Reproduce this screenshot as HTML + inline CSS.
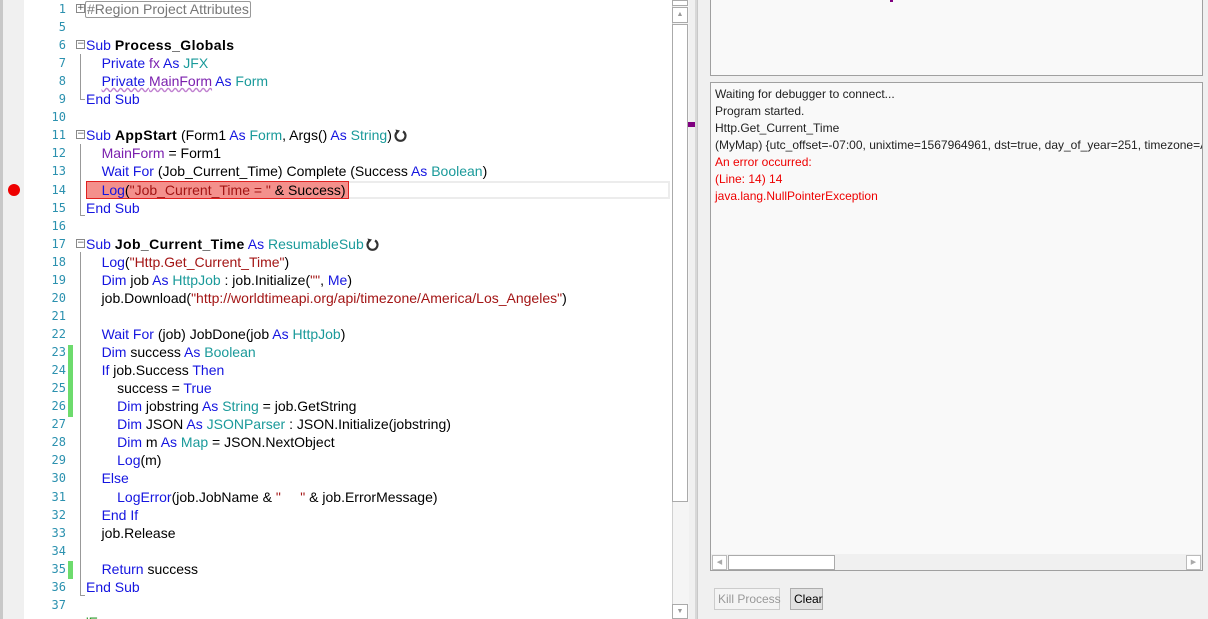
<!DOCTYPE html>
<html><head><meta charset="utf-8"><style>
*{margin:0;padding:0;box-sizing:border-box}
html,body{width:1208px;height:619px;overflow:hidden}
body{background:#f0f0f0;position:relative;font-family:"Liberation Sans",sans-serif}
#ed{position:absolute;left:0;top:0;width:672px;height:619px;background:#fff;overflow:hidden}
#gut{position:absolute;left:0;top:0;width:24px;height:619px;background:#f0f0f0;border-left:3px solid #c8c8c8}
.l{position:absolute;left:0;height:18px;line-height:18px;font-size:14px;white-space:pre;width:672px}
.n{position:absolute;left:30px;width:36px;text-align:right;color:#2b91af;font-family:"DejaVu Sans Mono","Liberation Mono",monospace;font-size:12px}
.c{position:absolute;left:86px;color:#000}
.k{color:#1515e0}.t{color:#1a9a9a}.s{color:#a31515}.p{color:#7b1fae}.b{font-weight:bold;letter-spacing:0.4px}
.fold{position:absolute;left:76px;top:4px;width:9px;height:9px;border:1px solid #888;background:#fff;font-size:9px;line-height:7px;text-align:center;color:#555;font-family:"DejaVu Sans",sans-serif}
.vl{position:absolute;left:80px;width:1px;background:#999}
.gb{position:absolute;left:68px;width:5px;height:18px;background:#6ddb6d}
.rs{display:inline-block;vertical-align:-2px;margin-left:2px}
.box{position:absolute;border:1px solid #a0a0a0;background:#f9f9f9}
.log{font-size:12px;line-height:17px;color:#222;padding:3px 0 0 4px;white-space:pre}
.btn{position:absolute;top:588px;height:22px;border:1px solid #adadad;font-size:12px;line-height:20px;padding:0 3px;white-space:nowrap}
</style></head><body>
<div id="ed">
<div id="gut"></div>
<div style="position:absolute;left:8px;top:184px;width:12px;height:12px;border-radius:50%;background:#e00"></div>
<div class="vl" style="top:54px;height:46px"></div><div style="position:absolute;left:80px;top:99px;width:5px;height:1px;background:#999"></div>
<div class="vl" style="top:144px;height:72px"></div><div style="position:absolute;left:80px;top:215px;width:5px;height:1px;background:#999"></div>
<div class="vl" style="top:252px;height:344px"></div><div style="position:absolute;left:80px;top:595px;width:5px;height:1px;background:#999"></div>
<div class="gb" style="top:345px;height:72px"></div>
<div class="gb" style="top:561px"></div>
<div style="position:absolute;left:86px;top:181px;width:584px;height:18px;border:2px solid #ececec"></div>
<div style="position:absolute;left:86px;top:181px;width:263px;height:18px;background:#f4908c;border:1px solid #e02020"></div>

<div class="l" style="top:0"><span class="n">1</span><span class="fold">+</span><span class="c" style="color:#777;border:1px solid #999;border-radius:2px;line-height:15px;top:1px;padding:0 1px;left:85px">#Region Project Attributes</span></div>
<div class="l" style="top:18px"><span class="n">5</span></div>
<div class="l" style="top:36px"><span class="n">6</span><span class="fold">−</span><span class="c"><span class="k">Sub</span> <span class="b">Process_Globals</span></span></div>
<div class="l" style="top:54px"><span class="n">7</span><span class="c">    <span class="k">Private</span> <span class="p">fx</span> <span class="k">As</span> <span class="t">JFX</span></span></div>
<div class="l" style="top:72px"><span class="n">8</span><span class="c">    <span class="k" style="text-decoration:underline wavy #c080d0">Private <span class="p">MainForm</span></span> <span class="k">As</span> <span class="t">Form</span></span></div>
<div class="l" style="top:90px"><span class="n">9</span><span class="c"><span class="k">End Sub</span></span></div>
<div class="l" style="top:108px"><span class="n">10</span></div>
<div class="l" style="top:126px"><span class="n">11</span><span class="fold">−</span><span class="c"><span class="k">Sub</span> <span class="b">AppStart</span> (Form1 <span class="k">As</span> <span class="t">Form</span>, Args() <span class="k">As</span> <span class="t">String</span>)<svg class="rs" width="13" height="13" viewBox="0 0 13 13"><path d="M4 2.5A5 5 0 1 0 9 2.5" fill="none" stroke="#333" stroke-width="2.2"/><path d="M1.5 0.5L6 1.5L3 5Z" fill="#333"/></svg></span></div>
<div class="l" style="top:144px"><span class="n">12</span><span class="c">    <span class="p">MainForm</span> = Form1</span></div>
<div class="l" style="top:162px"><span class="n">13</span><span class="c">    <span class="k">Wait For</span> (Job_Current_Time) Complete (Success <span class="k">As</span> <span class="t">Boolean</span>)</span></div>
<div class="l" style="top:181px"><span class="n">14</span><span class="c">    <span class="k">Log</span>(<span class="s">"Job_Current_Time = "</span> &amp; Success)</span></div>
<div class="l" style="top:199px"><span class="n">15</span><span class="c"><span class="k">End Sub</span></span></div>
<div class="l" style="top:217px"><span class="n">16</span></div>
<div class="l" style="top:235px"><span class="n">17</span><span class="fold">−</span><span class="c"><span class="k">Sub</span> <span class="b">Job_Current_Time</span> <span class="k">As</span> <span class="t">ResumableSub</span><svg class="rs" width="13" height="13" viewBox="0 0 13 13"><path d="M4 2.5A5 5 0 1 0 9 2.5" fill="none" stroke="#333" stroke-width="2.2"/><path d="M1.5 0.5L6 1.5L3 5Z" fill="#333"/></svg></span></div>
<div class="l" style="top:253px"><span class="n">18</span><span class="c">    <span class="k">Log</span>(<span class="s">"Http.Get_Current_Time"</span>)</span></div>
<div class="l" style="top:271px"><span class="n">19</span><span class="c">    <span class="k">Dim</span> job <span class="k">As</span> <span class="t">HttpJob</span> : job.Initialize(<span class="s">""</span>, <span class="k">Me</span>)</span></div>
<div class="l" style="top:289px"><span class="n">20</span><span class="c">    job.Download(<span class="s">"http://worldtimeapi.org/api/timezone/America/Los_Angeles"</span>)</span></div>
<div class="l" style="top:307px"><span class="n">21</span></div>
<div class="l" style="top:325px"><span class="n">22</span><span class="c">    <span class="k">Wait For</span> (job) JobDone(job <span class="k">As</span> <span class="t">HttpJob</span>)</span></div>
<div class="l" style="top:343px"><span class="n">23</span><span class="c">    <span class="k">Dim</span> success <span class="k">As</span> <span class="t">Boolean</span></span></div>
<div class="l" style="top:361px"><span class="n">24</span><span class="c">    <span class="k">If</span> job.Success <span class="k">Then</span></span></div>
<div class="l" style="top:379px"><span class="n">25</span><span class="c">        success = <span class="k">True</span></span></div>
<div class="l" style="top:397px"><span class="n">26</span><span class="c">        <span class="k">Dim</span> jobstring <span class="k">As</span> <span class="t">String</span> = job.GetString</span></div>
<div class="l" style="top:415px"><span class="n">27</span><span class="c">        <span class="k">Dim</span> JSON <span class="k">As</span> <span class="t">JSONParser</span> : JSON.Initialize(jobstring)</span></div>
<div class="l" style="top:433px"><span class="n">28</span><span class="c">        <span class="k">Dim</span> m <span class="k">As</span> <span class="t">Map</span> = JSON.NextObject</span></div>
<div class="l" style="top:451px"><span class="n">29</span><span class="c">        <span class="k">Log</span>(m)</span></div>
<div class="l" style="top:469px"><span class="n">30</span><span class="c">    <span class="k">Else</span></span></div>
<div class="l" style="top:488px"><span class="n">31</span><span class="c">        <span class="k">LogError</span>(job.JobName &amp; <span class="s">"     "</span> &amp; job.ErrorMessage)</span></div>
<div class="l" style="top:506px"><span class="n">32</span><span class="c">    <span class="k">End If</span></span></div>
<div class="l" style="top:524px"><span class="n">33</span><span class="c">    job.Release</span></div>
<div class="l" style="top:542px"><span class="n">34</span></div>
<div class="l" style="top:560px"><span class="n">35</span><span class="c">    <span class="k">Return</span> success</span></div>
<div class="l" style="top:578px"><span class="n">36</span><span class="c"><span class="k">End Sub</span></span></div>
<div class="l" style="top:596px"><span class="n">37</span></div>
<div class="l" style="top:613px"><span class="c" style="color:#2a9a2a">'Ex</span></div>
</div>
<div style="position:absolute;left:672px;top:0;width:17px;height:619px;background:#f5f5f5;border-left:1px solid #d0d0d0"></div>
<div style="position:absolute;left:672px;top:0;width:16px;height:6px;border:1px solid #aaa;background:#fff"></div>
<div style="position:absolute;left:672px;top:7px;width:16px;height:16px;border:1px solid #aaa;background:#fff;font-size:7px;color:#999;text-align:center;line-height:14px">▲</div>
<div style="position:absolute;left:672px;top:24px;width:16px;height:478px;border:1px solid #aaa;background:#fff"></div>
<div style="position:absolute;left:672px;top:604px;width:16px;height:15px;border:1px solid #aaa;background:#fff;font-size:7px;color:#999;text-align:center;line-height:13px">▼</div>
<div style="position:absolute;left:688px;top:122px;width:7px;height:5px;background:#800080"></div>
<div style="position:absolute;left:695px;top:0;width:2px;height:619px;background:#d8d8d8"></div>
<div style="position:absolute;left:697px;top:0;width:1px;height:619px;background:#c8c8c8"></div>
<div class="box" style="left:710px;top:-2px;width:493px;height:78px"></div>
<div style="position:absolute;left:890px;top:0;width:3px;height:2px;background:#800080"></div>
<div class="box log" style="left:710px;top:82px;width:493px;height:489px;overflow:hidden">Waiting for debugger to connect...
Program started.
Http.Get_Current_Time
(MyMap) {utc_offset=-07:00, unixtime=1567964961, dst=true, day_of_year=251, timezone=America/Los_Angeles}
<span style="color:#e00">An error occurred:
(Line: 14) 14
java.lang.NullPointerException</span></div>
<div style="position:absolute;left:711px;top:554px;width:491px;height:16px;background:#f0f0f0"></div>
<div style="position:absolute;left:712px;top:555px;width:15px;height:15px;border:1px solid #bbb;background:#fff;font-size:7px;color:#aaa;line-height:13px;text-align:center">◀</div>
<div style="position:absolute;left:728px;top:555px;width:107px;height:15px;border:1px solid #aaa;background:#fff"></div>
<div style="position:absolute;left:1186px;top:555px;width:15px;height:15px;border:1px solid #bbb;background:#fff;font-size:7px;color:#aaa;line-height:13px;text-align:center">▶</div>
<div class="btn" style="left:714px;width:66px;color:#999;border-color:#ccc;background:#f4f4f4">Kill Process</div>
<div class="btn" style="left:790px;width:33px;color:#000;background:#e1e1e1">Clear</div>
</body></html>
